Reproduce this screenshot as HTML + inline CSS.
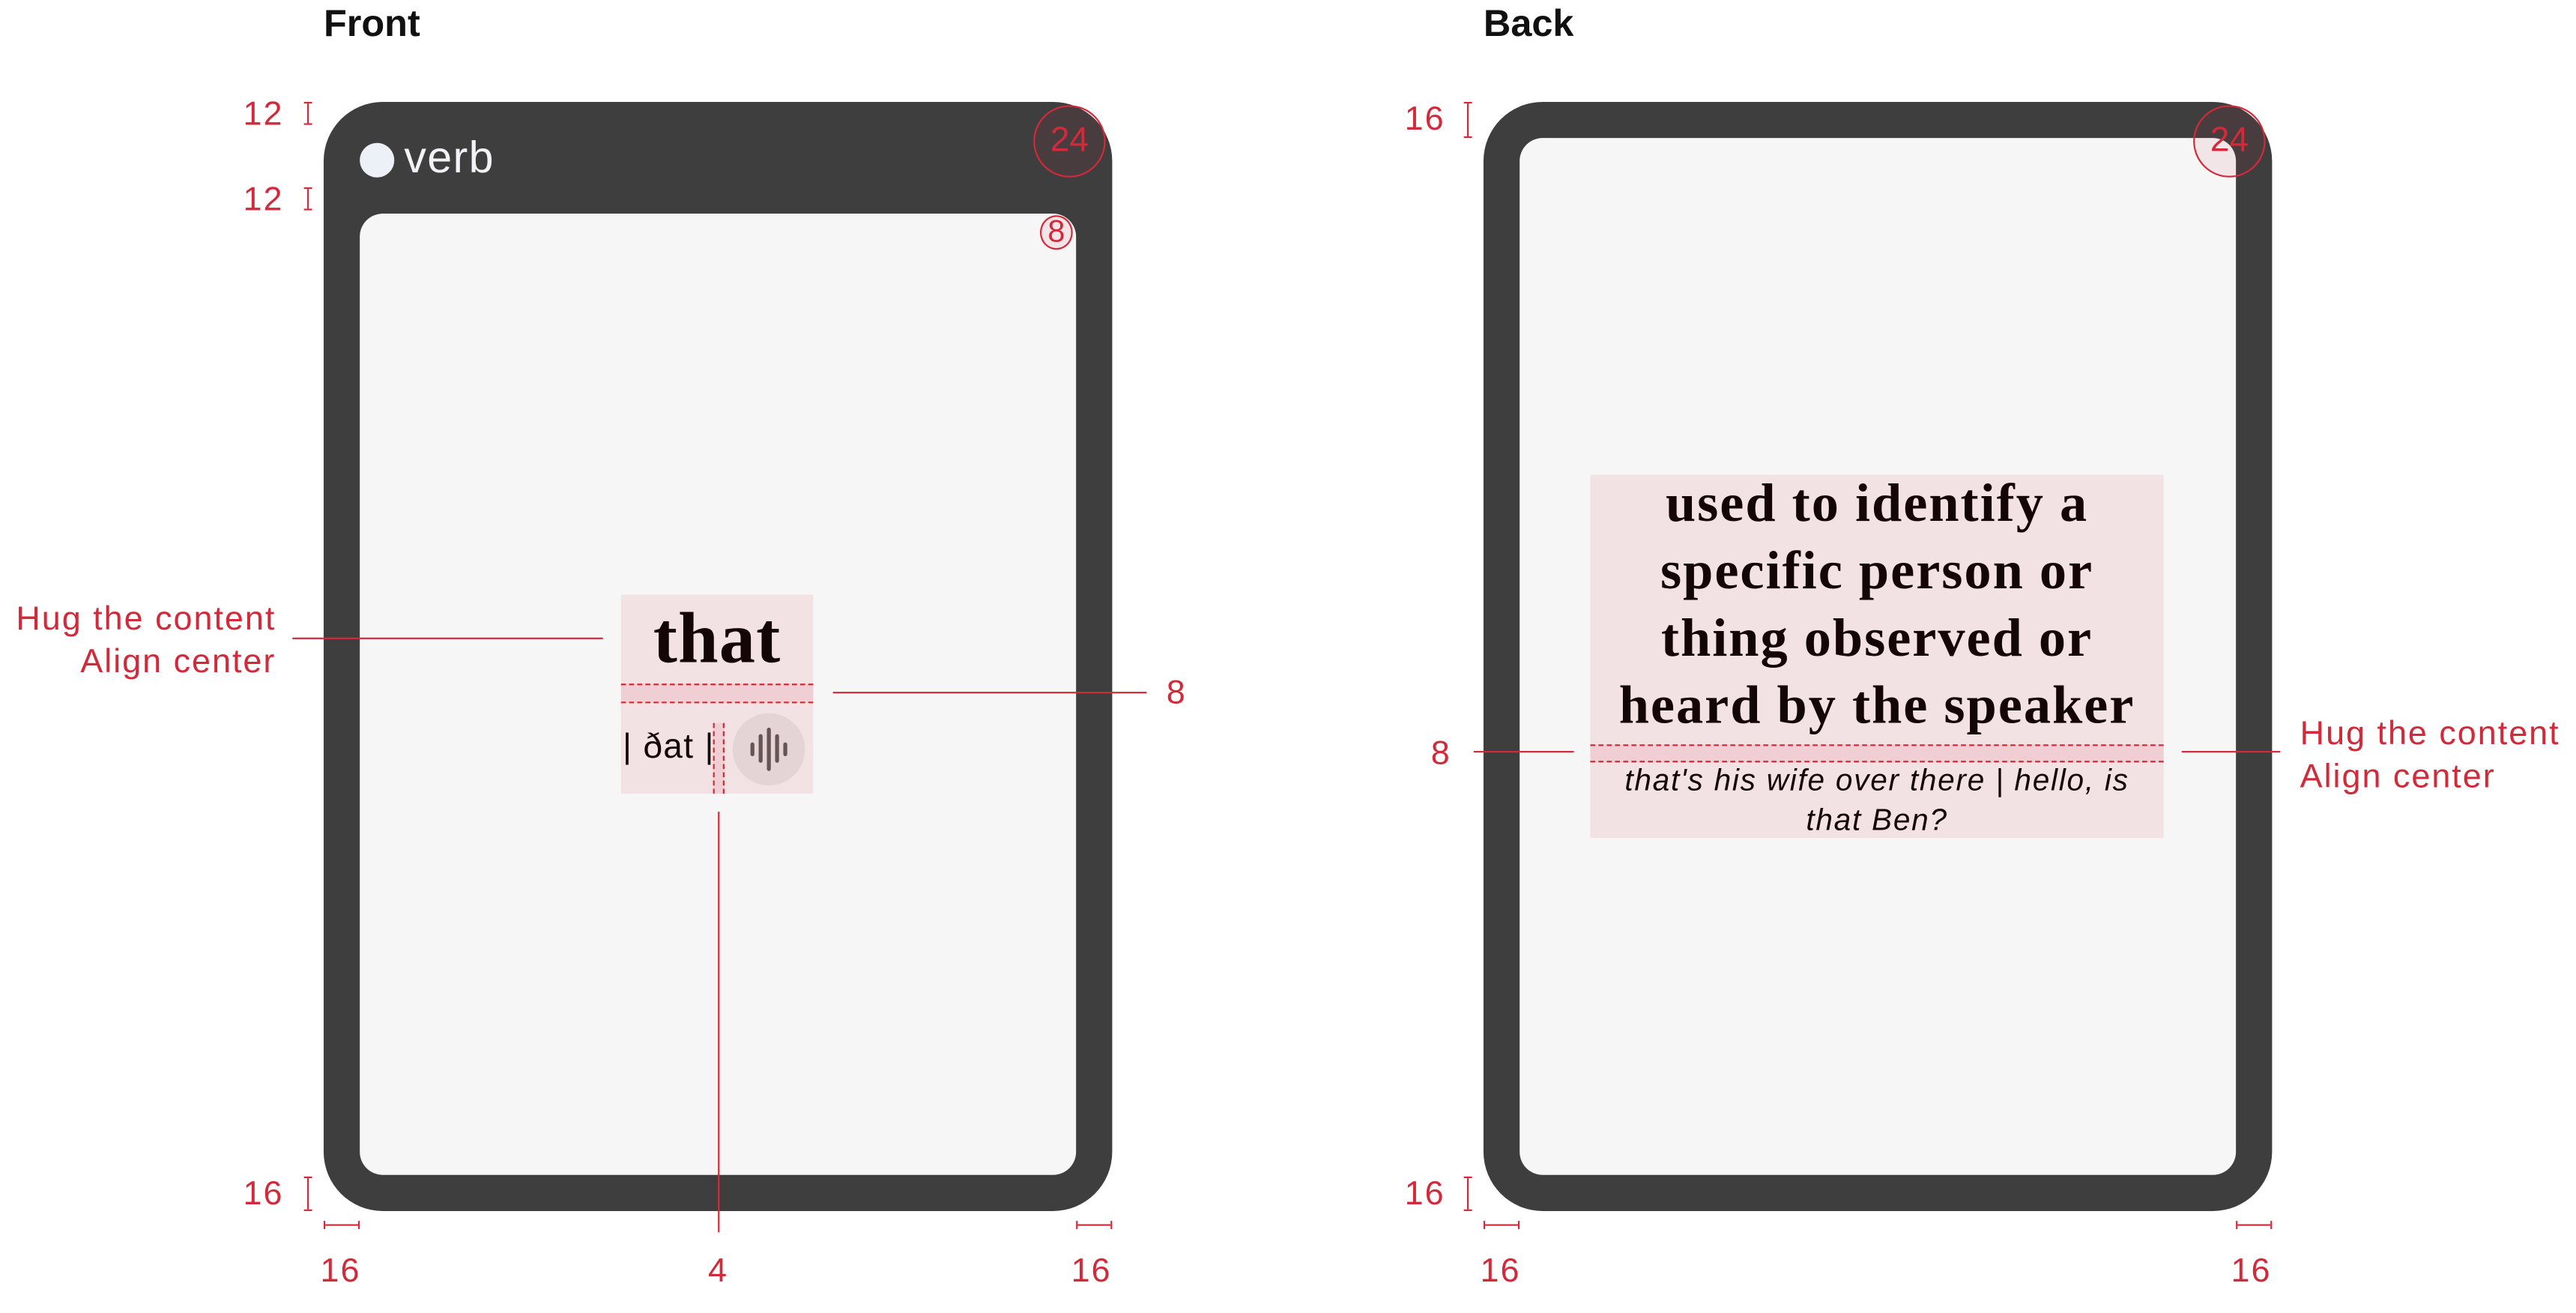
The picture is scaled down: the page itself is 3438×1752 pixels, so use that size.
<!DOCTYPE html>
<html><head><meta charset="utf-8"><style>
html,body{margin:0;padding:0;background:#fff;width:3438px;height:1751px;overflow:hidden}
#s{position:absolute;left:0;top:0;width:1568px;height:799px;transform:scale(2.1926);transform-origin:0 0;font-family:"Liberation Sans",sans-serif}
.a{position:absolute}
.red{color:#d12a3a}
.t{font-size:20.5px;line-height:24px;letter-spacing:0.9px}
.h{font-weight:bold;font-size:23px;color:#111}
.card{position:absolute;background:#3e3e3e;border-radius:36px}
.inner{position:absolute;background:#f6f6f6;border-radius:14px}
.pink{position:absolute;background:#f3e2e3}
.band{position:absolute;background:#efcfd3;border-top:1px dashed #d12a3a;border-bottom:1px dashed #d12a3a;box-sizing:border-box}
.ln{position:absolute;background:#d12a3a}
.ib{position:absolute;width:5px;border-top:1.5px solid #d12a3a;border-bottom:1.5px solid #d12a3a;box-sizing:border-box}
.ib:after{content:"";position:absolute;left:2px;top:0;bottom:0;width:1.3px;background:#d12a3a}
.hr{position:absolute;height:5px;border-left:1.5px solid #d12a3a;border-right:1.5px solid #d12a3a;box-sizing:border-box}
.hr:after{content:"";position:absolute;top:2px;left:0;right:0;height:1.3px;background:#d12a3a}
.circ{position:absolute;border:1.3px solid #d12a3a;border-radius:50%;box-sizing:border-box;color:#d12a3a;text-align:center;background:rgba(209,42,58,.08)}
.serif{font-family:"Liberation Serif",serif;font-weight:bold;color:#140607}
</style></head><body><div id="s">
<div class="a h" style="left:197px;top:1px">Front</div>
<div class="a h" style="left:903px;top:1px">Back</div>

<!-- Front card -->
<div class="card" style="left:197px;top:62px;width:480px;height:675px"></div>
<div class="a" style="left:219px;top:87px;width:21px;height:21px;border-radius:50%;background:#eef0f8"></div>
<div class="a" style="left:246px;top:80px;font-size:27px;color:#f3f3f7;line-height:32px;letter-spacing:0.6px">verb</div>
<div class="inner" style="left:219px;top:130px;width:436px;height:585px"></div>
<div class="circ" style="left:629px;top:64px;width:44px;height:44px;font-size:21px;line-height:42px">24</div>
<div class="circ" style="left:633px;top:131px;width:20px;height:21px;font-size:19px;line-height:19px">8</div>

<div class="pink" style="left:378px;top:362px;width:117px;height:121px"></div>
<div class="a serif" style="left:378px;top:362px;width:117px;text-align:center;font-size:44px;line-height:54px;letter-spacing:0.5px">that</div>
<div class="band" style="left:378px;top:416px;width:117px;height:12px"></div>
<div class="a" style="left:379px;top:442px;font-size:21px;color:#140607;line-height:26px;letter-spacing:0.6px">| ðat |</div>
<div class="band" style="left:434px;top:440px;width:7px;height:43px;border:none;border-left:1px dashed #d12a3a;border-right:1px dashed #d12a3a"></div>
<div class="a" style="left:446px;top:434px;width:44px;height:44px;border-radius:50%;background:#e4d4d5"></div>
<svg class="a" style="left:446px;top:434px" width="44" height="44" viewBox="0 0 44 44"><g stroke="#675556" stroke-width="2.4" stroke-linecap="round"><line x1="12" y1="19" x2="12" y2="25"/><line x1="17" y1="14" x2="17" y2="29"/><line x1="22" y1="10" x2="22" y2="34"/><line x1="27" y1="14" x2="27" y2="29"/><line x1="32" y1="19" x2="32" y2="25"/></g></svg>

<!-- Front annotations -->
<div class="a red t" style="left:148px;top:58px">12</div>
<div class="ib" style="left:185px;top:62px;height:14px"></div>
<div class="a red t" style="left:148px;top:110px">12</div>
<div class="ib" style="left:185px;top:114px;height:14px"></div>
<div class="a red t" style="left:148px;top:715px">16</div>
<div class="ib" style="left:185px;top:716px;height:21px"></div>
<div class="hr" style="left:197px;top:743px;width:22px"></div>
<div class="hr" style="left:655px;top:743px;width:22px"></div>
<div class="a red t" style="left:195px;top:762px">16</div>
<div class="a red t" style="left:431px;top:762px">4</div>
<div class="a red t" style="left:652px;top:762px">16</div>
<div class="a red t" style="left:0;top:364px;width:168px;text-align:right;line-height:26px;white-space:nowrap">Hug the content<br>Align center</div>
<div class="ln" style="left:178px;top:388px;width:189px;height:1.4px"></div>
<div class="ln" style="left:507px;top:421px;width:191px;height:1.4px"></div>
<div class="a red t" style="left:710px;top:410px">8</div>
<div class="ln" style="left:437px;top:494px;width:1.4px;height:256px"></div>

<!-- Back card -->
<div class="card" style="left:903px;top:62px;width:480px;height:675px"></div>
<div class="inner" style="left:925px;top:84px;width:436px;height:631px"></div>
<div class="circ" style="left:1335px;top:64px;width:44px;height:44px;font-size:21px;line-height:42px">24</div>
<div class="pink" style="left:968px;top:289px;width:349px;height:221px"></div>
<div class="a serif" style="left:928px;top:287px;width:429px;text-align:center;font-size:33px;line-height:41px;white-space:nowrap;letter-spacing:0.9px">used to identify a<br>specific person or<br>thing observed or<br>heard by the speaker</div>
<div class="band" style="left:968px;top:453px;width:349px;height:11px"></div>
<div class="a" style="left:948px;top:463px;width:389px;text-align:center;font-size:18.5px;line-height:24px;font-style:italic;color:#140607;letter-spacing:0.8px;white-space:nowrap">that's his wife over there | hello, is<br>that Ben?</div>

<div class="a red t" style="left:855px;top:61px">16</div>
<div class="ib" style="left:891px;top:62px;height:22px"></div>
<div class="a red t" style="left:855px;top:715px">16</div>
<div class="ib" style="left:891px;top:716px;height:21px"></div>
<div class="hr" style="left:903px;top:743px;width:22px"></div>
<div class="hr" style="left:1361px;top:743px;width:22px"></div>
<div class="a red t" style="left:901px;top:762px">16</div>
<div class="a red t" style="left:1358px;top:762px">16</div>
<div class="a red t" style="left:871px;top:447px">8</div>
<div class="ln" style="left:897px;top:457px;width:61px;height:1.4px"></div>
<div class="ln" style="left:1328px;top:457px;width:60px;height:1.4px"></div>
<div class="a red t" style="left:1400px;top:434px;line-height:26px;white-space:nowrap">Hug the content<br>Align center</div>
</div></body></html>
